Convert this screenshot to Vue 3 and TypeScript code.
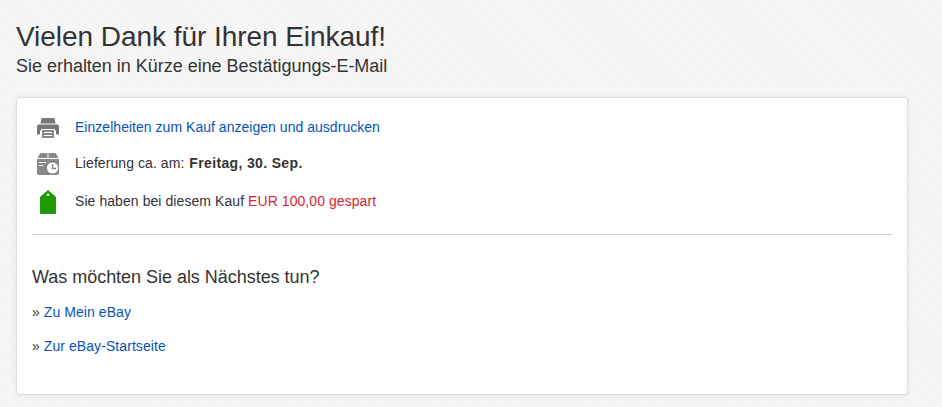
<template>
  <main class="page">
    <h1 class="title">Vielen Dank für Ihren Einkauf!</h1>
    <p class="subtitle">Sie erhalten in Kürze eine Bestätigungs-E-Mail</p>

    <section class="card">
      <ul class="info">
        <li class="info-row">
          <svg class="icon" width="24" height="24" viewBox="0 0 24 24">
            <path fill="#777" d="M5.500 2h13l1 5.500h-15z" />
            <path fill="#777" d="M3 8.500h18a2 2 0 0 1 2 2v8h-3v-4H4v4H1v-8a2 2 0 0 1 2-2z" />
            <path fill="#888" stroke="#fff" d="M5.500 13.500h13v9h-13z" />
            <path stroke="#fff" d="M8 16.500h8M8 19.500h8" />
          </svg>
          <a href="#" class="link row-link">Einzelheiten zum Kauf anzeigen und ausdrucken</a>
        </li>
        <li class="info-row">
          <svg class="icon" width="24" height="24" viewBox="0 0 24 24">
            <path fill="#888" d="M4.500 1h7v5H1.500zM12.500 1h7l3 5h-10zM1 7h22v14a2 2 0 0 1-2 2H3a2 2 0 0 1-2-2z" />
            <path stroke="#fff" d="M3 10.500h7M3 13.500h4" />
            <circle cx="16.500" cy="16" r="6" fill="#fff" stroke="#888" />
            <path fill="none" stroke="#888" stroke-width="1.500" d="M16.500 12v4.500h3.500" />
          </svg>
          <span>Lieferung ca. am: <b class="date">Freitag, 30. Sep.</b></span>
        </li>
        <li class="info-row">
          <svg class="icon" width="24" height="24" viewBox="0 0 24 24">
            <path fill="#1f9a00" fill-rule="evenodd" d="M12 0l8 7v16a1 1 0 0 1-1 1H5a1 1 0 0 1-1-1V7zM12 3.500a1.300 1.300 0 1 0 .01 0z" />
          </svg>
          <span>Sie haben bei diesem Kauf <em class="saving">EUR 100,00 gespart</em></span>
        </li>
      </ul>

      <h2 class="next-title">Was möchten Sie als Nächstes tun?</h2>
      <p class="next-link">» <a href="#" class="link">Zu Mein eBay</a></p>
      <p class="next-link">» <a href="#" class="link">Zur eBay-Startseite</a></p>
    </section>
  </main>
</template>

<script setup lang="ts">
</script>

<style>
body {
  background-color: #f6f6f6;
  background-image: repeating-linear-gradient(45deg, #f8f8f8 0 1px, #f4f4f4 1px 3px);
}
</style>

<style scoped>
.page {
  box-sizing: border-box;
  height: 407px;
  padding: 18px 34px 0 16px;
  overflow: hidden;
  font-family: "Liberation Sans", Arial, sans-serif;
  font-size: 14px;
  letter-spacing: 0.07px;
  color: #333;
}

.title {
  margin: 0;
  font-size: 28px;
  font-weight: 400;
  letter-spacing: -0.05px;
  line-height: 37px;
}

.subtitle {
  margin: 0 0 20px;
  font-size: 18px;
  letter-spacing: -0.02px;
  line-height: 22px;
}

.card {
  box-sizing: border-box;
  height: 298px;
  padding: 11px 15px 0;
  background: #fff;
  border: 1px solid #ddd;
  border-radius: 3px;
  box-shadow: 0 0 7px rgba(0, 0, 0, 0.07);
}

.info {
  margin: 0;
  padding: 0 0 13px;
  list-style: none;
  border-bottom: 1px solid #ccc;
}

.info-row {
  display: flex;
  align-items: center;
  gap: 15px;
  height: 36px;
  padding-left: 4px;
}

.info-row:last-child {
  height: 40px;
}

.icon {
  margin-top: 2px;
}

.date {
  margin-left: 1px;
  letter-spacing: 0.35px;
}

.link {
  color: #0654ba;
  text-decoration: none;
}

.row-link {
  letter-spacing: 0.03px;
}

.saving {
  color: #dd1e31;
  font-style: normal;
}

.next-title {
  margin: 31px 0 0;
  font-size: 18px;
  font-weight: 400;
  letter-spacing: -0.03px;
  line-height: 22px;
}

.next-link {
  margin: 15px 0 0;
  line-height: 19px;
}
</style>
